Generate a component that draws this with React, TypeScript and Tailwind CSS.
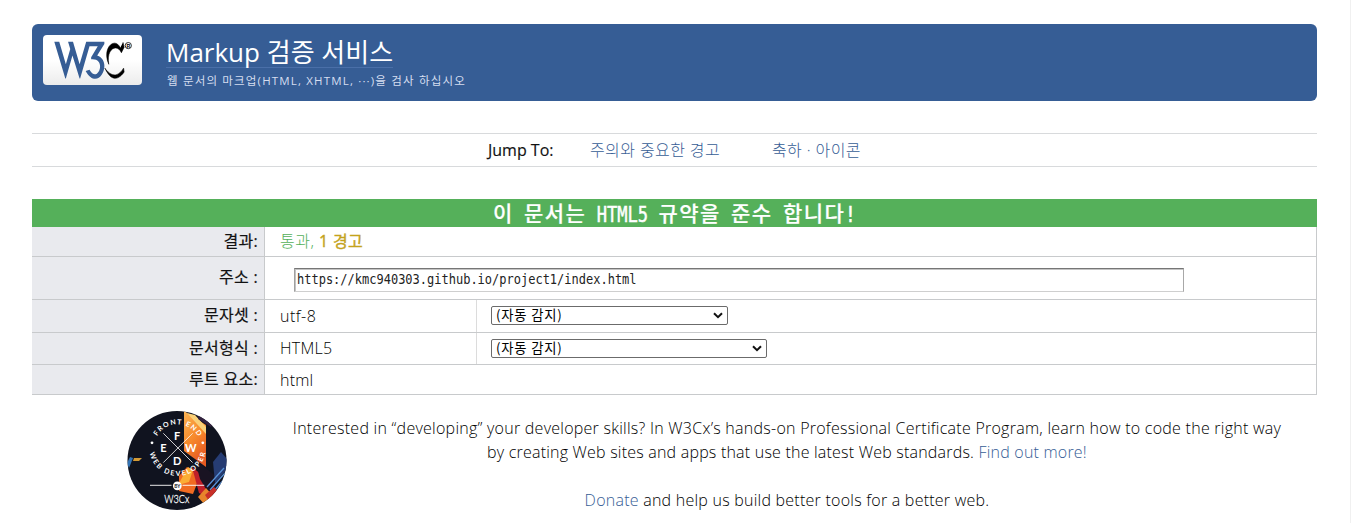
import type { ReactNode } from "react";

const sans = "font-['Open_Sans','Noto_Sans_CJK_KR',sans-serif]";

function W3CLogo() {
  return (
    <svg width="99" height="50" viewBox="0 0 99 50" aria-label="W3C">
      <g transform="translate(10.2 4) scale(0.55)">
        <path
          fill="#365d95"
          d="M36,5l12,41l12-41h33v4l-13,21c30,10,2,69-21,28l7-2c15,27,33-22,3-19v-4l12-20h-15l-17,59h-1l-13-42l-12,42h-1l-20-67h9l12,41l8-28l-4-13h9"
        />
        <path
          fill="#000"
          stroke="#000"
          strokeWidth="1"
          d="M94,53c15,32,30,14,35,7l-1-7c-16,26-32,3-34,0M122,16c-10-21-34,0-21,30c-5-30 16-38 23-21l5-10l-2-9"
        />
      </g>
      <circle cx="85.3" cy="10.6" r="3.1" fill="none" stroke="#000" strokeWidth="0.8" />
      <text x="85.3" y="12.5" fontSize="5.2" fontWeight="700" textAnchor="middle" fontFamily="Liberation Sans">
        R
      </text>
    </svg>
  );
}

function Badge() {
  return (
    <svg width="100" height="100" viewBox="0 0 100 100" aria-label="Front End Web Developer">
      <defs>
        <clipPath id="disc">
          <circle cx="50" cy="49.5" r="49.5" />
        </clipPath>
        <linearGradient id="flame" x1="0" y1="0" x2="0.4" y2="1">
          <stop offset="0" stopColor="#fbb454" />
          <stop offset="0.55" stopColor="#f78a2c" />
          <stop offset="1" stopColor="#e65a22" />
        </linearGradient>
        <path id="arcTop" d="M27 36.8a23.5 23.5 0 0 1 47 0" />
        <path id="arcBottom" d="M22.4 36.8a28.2 28.2 0 0 0 56.4 0" />
      </defs>
      <g clipPath="url(#disc)">
        <rect width="100" height="100" fill="#10131f" />
        <path d="M0 52l3-6l3 1l-4 10z" fill="#3474b5" />
        <path d="M7 47l8 0l-3 3l-6 0z" fill="#d39a36" />
        <path d="M57 0l22 14v42l-22-16z" fill="url(#flame)" />
        <path d="M60 2l8 2l11 12v7z" fill="#f9d078" />
        <path d="M72 0h22l-10 16l-13-8z" fill="#33223f" />
        <path d="M52 80l0-15l8-9l13 9l-7 18z" fill="#f06b22" />
        <path d="M51 74l10-18l5 3l-4 12z" fill="#fbad35" />
        <path d="M65 56l15 12l4 20l-12-6z" fill="#c0202a" />
        <path d="M68 49l22 17l-4 24l-13-22z" fill="#191322" />
        <path d="M86 51l8-10l6 7v10l-12 14z" fill="#263c73" />
        <path d="M80 76l17-19M83 79l15-17M87 80l12-14" stroke="#5790d6" strokeWidth="1.3" />
        <path d="M71 86l8-9l8 9l-10 7z" fill="#e7842b" />
        <path d="M78 84l9-8l5 5l-10 9z" fill="#c92f28" />
      </g>
      <path d="M36.3 22.3l29.3 29.3M65.6 22.3l-29.3 29.3" stroke="#fff" strokeWidth="0.8" />
      <g fill="#fff" fontFamily="Lato" fontWeight="700" textAnchor="middle">
        <g fontSize="11">
          <text x="50.2" y="29">F</text>
          <text x="36.5" y="41">E</text>
          <text x="63.8" y="41">W</text>
          <text x="50.3" y="54">D</text>
        </g>
        <g fontSize="7">
          <text letterSpacing="1.2">
            <textPath href="#arcTop" startOffset="51%">FRONT END</textPath>
          </text>
          <text letterSpacing="1.7">
            <textPath href="#arcBottom" startOffset="51%">WEB DEVELOPER</textPath>
          </text>
        </g>
        <circle cx="25" cy="31.8" r="1.4" />
        <circle cx="75.8" cy="31.8" r="1.4" />
        <circle cx="50.3" cy="74.8" r="4.4" />
      </g>
      <path d="M23 74.3h21.5M55.5 74.3h21.8" stroke="#fff" strokeWidth="0.9" />
      <text x="50.3" y="76.6" fontSize="4.8" fontWeight="700" fontFamily="Lato" textAnchor="middle" fill="#10131f">
        BY
      </text>
      <text x="37.3" y="92.2" fontSize="12.5" fontFamily="Lato" fill="#fff" stroke="#fff" strokeWidth="0.3" textLength="25" lengthAdjust="spacingAndGlyphs">
        W3Cx
      </text>
    </svg>
  );
}

function Label({ children }: { children: ReactNode }) {
  return (
    <div className="flex w-[233px] shrink-0 items-center justify-end border-r border-[#c8cacc] bg-[#e9eaee] pb-[2px] pr-[6px] font-normal tracking-[0.3px] text-[#111] [-webkit-text-stroke:0.2px]">
      {children}
    </div>
  );
}

function AutoSelect({ width }: { width: string }) {
  return (
    <div
      className={`flex h-[19px] items-center justify-between rounded-[2px] border border-[#6b6b6b] bg-white pl-[4px] pr-[4px] text-[13.33px] leading-none text-black ${width}`}
    >
      <span className="pb-px font-['Noto_Sans_CJK_KR',sans-serif] font-normal tracking-[0.8px]">(자동 감지)</span>
      <svg width="10" height="7" viewBox="0 0 10 7">
        <path d="M1 1.2l4 4l4-4" fill="none" stroke="#111" strokeWidth="2" />
      </svg>
    </div>
  );
}

function Row({ height, children }: { height: string; children: ReactNode }) {
  return <div className={`flex border-b border-[#c8cacc] ${height}`}>{children}</div>;
}

function Hangul({ children }: { children: ReactNode }) {
  return (
    <span className="font-['Noto_Sans_CJK_KR',sans-serif] text-[21px] font-medium tracking-[1.45px] [-webkit-text-stroke:0.2px]">
      {children}
    </span>
  );
}

export default function App() {
  return (
    <div className={`h-[523px] w-[1351px] overflow-hidden border-r border-[#f0f0f0] bg-white pl-[32px] pt-[24px] text-[16px] font-light leading-[24px] text-black ${sans}`}>
      <div className="w-[1285px]">
        <header className="flex h-[77px] rounded-[6px] bg-[#365d95] pl-[11px] pt-[11px]">
          <div className="h-[50px] w-[99px] shrink-0 rounded-[4px] bg-linear-to-b from-white from-50% to-[#ececec]">
            <W3CLogo />
          </div>
          <div className="ml-[24px] flex flex-col items-start text-white">
            <h1 className="h-[33px] whitespace-nowrap border-b border-[#4a6fa8] text-[26px] font-normal leading-[34px]">
              Markup 검증 서비스
            </h1>
            <p className="ml-[1px] mt-[4px] whitespace-nowrap text-[11.5px] font-normal leading-[18px] tracking-[1.17px] text-[#d5def0]">
              웹 문서의 마크업(HTML, XHTML, ···)을 검사 하십시오
            </p>
          </div>
        </header>

        <nav className="mt-[32px] flex h-[34px] items-center border-y border-[#d8dadc] pb-px pl-[456px] text-[#365d95]">
          <span className="w-[102px] whitespace-nowrap font-normal text-[#111] [-webkit-text-stroke:0.15px]">Jump To:</span>
          <a className="w-[182px] whitespace-nowrap tracking-[0.4px]">주의와 중요한 경고</a>
          <a className="whitespace-nowrap tracking-[0.4px]">축하 · 아이콘</a>
        </nav>

        <main className="mt-[32px]">
          <h2 className="h-[28px] overflow-hidden whitespace-pre bg-[#55b05a] pl-[461px] font-['DejaVu_Sans_Mono',monospace] text-[17.1px] font-normal leading-[26px] text-white">
            <Hangul>이</Hangul> <Hangul>문서는</Hangul> <span className="inline-block scale-y-[1.2] leading-none [-webkit-text-stroke:0.4px]">HTML5</span>{" "}
            <Hangul>규약을</Hangul> <Hangul>준수</Hangul> <Hangul>합니다</Hangul>
            <span className="inline-block scale-y-[1.2] leading-none [-webkit-text-stroke:0.6px]">!</span>
          </h2>
          <div className="border-r border-[#c8cacc]">
            <Row height="h-[30px]">
              <Label>결과:</Label>
              <div className="flex items-center pb-px pl-[15px] text-[#55b05a]">
                <span className="whitespace-pre tracking-[0.5px]">통과, </span>
                <span className="font-normal tracking-[0.3px] text-[#c4a31c] [-webkit-text-stroke:0.4px]">1 경고</span>
              </div>
            </Row>
            <Row height="h-[43px]">
              <Label>주소 :</Label>
              <div className="flex items-center pl-[29px] pt-[3px]">
                <div className="flex h-[24px] w-[890px] items-center border border-b-[#cfcfcf] border-l-[#a0a0a0] border-r-[#a8a8a8] border-t-[#767676] pl-[2px] font-['DejaVu_Sans_Mono',monospace] text-[12px] font-normal text-[#222] shadow-[inset_1px_1px_0_#c4c4c4]">
                  <span className="scale-y-[1.12]">https://kmc940303.github.io/project1/index.html</span>
                </div>
              </div>
            </Row>
            <Row height="h-[33px]">
              <Label>문자셋 :</Label>
              <div className="flex w-[212px] items-center border-r border-[#dcdcdc] pl-[15px] tracking-[0.5px]">utf-8</div>
              <div className="flex items-center pb-[2px] pl-[14px]">
                <AutoSelect width="w-[237px]" />
              </div>
            </Row>
            <Row height="h-[32px]">
              <Label>문서형식 :</Label>
              <div className="flex w-[212px] items-center border-r border-[#dcdcdc] pb-px pl-[15px] tracking-[0.3px]">HTML5</div>
              <div className="flex items-center pl-[14px]">
                <AutoSelect width="w-[276px]" />
              </div>
            </Row>
            <Row height="h-[30px]">
              <Label>루트 요소:</Label>
              <div className="flex items-center pl-[15px] tracking-[0.2px]">html</div>
            </Row>
          </div>

          <section className="flex pt-[16px]">
            <div className="ml-[95px] w-[100px] shrink-0">
              <Badge />
            </div>
            <div className="ml-[32px] w-[1056px] shrink-0 text-center leading-[24px] tracking-[0.24px]">
              <p className="mt-[5px] whitespace-nowrap">
                <span className="tracking-[0.255px]">
                  Interested in “developing” your developer skills? In W3Cx’s hands-on Professional Certificate Program, learn how to code the right way
                </span>
                <br />
                <span className="tracking-[0.21px]">
                  by creating Web sites and apps that use the latest Web standards. <a className="text-[#365d95]">Find out more!</a>
                </span>
              </p>
              <p className="mt-[24px] whitespace-nowrap">
                <a className="text-[#365d95]">Donate</a> and help us build better tools for a better web.
              </p>
            </div>
          </section>
        </main>
      </div>
    </div>
  );
}
